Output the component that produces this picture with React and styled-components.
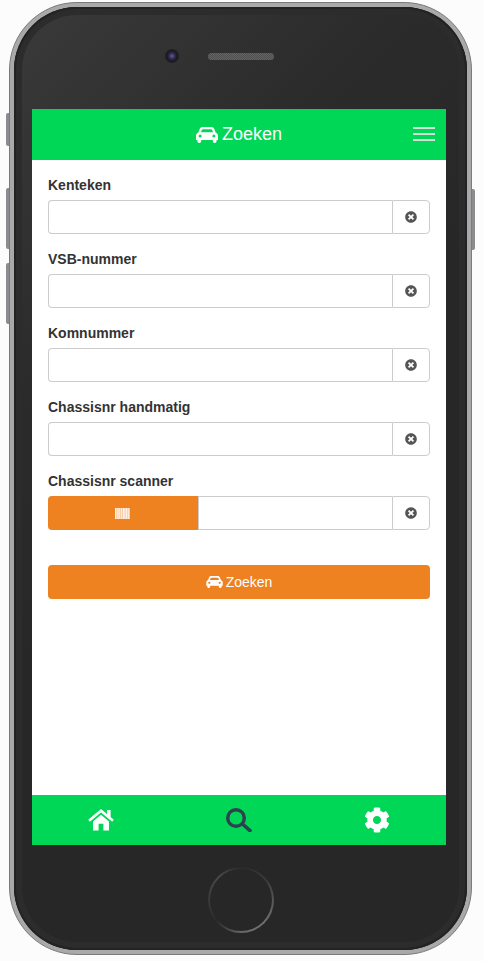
import React from "react";
import styled, { createGlobalStyle } from "styled-components";
import { FaCog, FaTimesCircle } from "react-icons/fa";

const Global = createGlobalStyle`
  html, body { margin: 0; padding: 0; background: #fcfcfc; }
  body { font-family: "Liberation Sans", Arial, sans-serif; overflow: hidden; }
  * { box-sizing: border-box; }
`;

const Page = styled.div`
  width: 484px;
  height: 961px;
  padding: 2px 12px 6px 9px;
`;

const Phone = styled.div`
  position: relative;
  width: 463px;
  height: 953px;
  padding: 4px;
  border: 1px solid #7a7a7a;
  border-radius: 68px;
  background: #a9a9a9;
`;

const SideKey = styled.span`
  position: absolute;
  left: ${(p) => (p.$right ? "auto" : "-4px")};
  right: ${(p) => (p.$right ? "-4px" : "auto")};
  top: ${(p) => p.$top}px;
  width: 3px;
  height: ${(p) => p.$h}px;
  background: #8b8b90;
  border-radius: ${(p) => (p.$right ? "0 2px 2px 0" : "2px 0 0 2px")};
`;

const Bezel = styled.div`
  display: flex;
  flex-direction: column;
  height: 100%;
  padding: 0 21px 0 18px;
  border-radius: 63px;
  background: linear-gradient(135deg, #3a3a3a 0%, #2b2b2b 28%, #272727 50%);
  box-shadow: inset 0 0 0 2px #232323, inset 0 0 0 8px #2c2c2c;
`;

const TopBar = styled.div`
  display: grid;
  grid-template-columns: 1fr auto 1fr;
  align-items: center;
  height: 102px;
  padding: 0 0 4px 4px;
  flex: none;
`;

const Camera = styled.span`
  justify-self: end;
  width: 14px;
  height: 14px;
  margin-right: 29px;
  border-radius: 50%;
  background: radial-gradient(circle, #6a5a95 0%, #3a2f5c 25%, #1c1c24 48%, #1f1f1f 100%);
`;

const Speaker = styled.span`
  width: 66px;
  height: 7px;
  border-radius: 4px;
  background: repeating-conic-gradient(#4e4e4e 0 25%, #656565 0 50%) 0 0 / 2px 2px;
`;

const Screen = styled.div`
  flex: none;
  display: flex;
  flex-direction: column;
  width: 414px;
  height: 736px;
  background: #fff;
`;

const Header = styled.header`
  position: relative;
  display: flex;
  align-items: center;
  justify-content: center;
  gap: 4px;
  height: 51px;
  flex: none;
  background: #00d757;
  color: #fff;
  font-size: 18px;
`;

const Burger = styled.span`
  position: absolute;
  right: 11px;
  top: 18px;
  display: flex;
  flex-direction: column;
  gap: 4px;
  width: 22px;
  & > i { display: block; height: 2px; background: #d4e2d8; }
`;

const Form = styled.form`
  flex: 1;
  display: flex;
  flex-direction: column;
  padding: 16px 16px 0;
`;

const Field = styled.div`
  display: flex;
  flex-direction: column;
  height: 74px;
`;

const Label = styled.label`
  height: 24px;
  font-size: 14px;
  line-height: 18px;
  font-weight: 700;
  color: #333;
`;

const InputGroup = styled.div`
  display: flex;
  height: 34px;
`;

const ScanButton = styled.button`
  flex: none;
  display: flex;
  align-items: center;
  justify-content: center;
  width: 150px;
  padding: 0 2px 0 0;
  border: 0;
  border-radius: 4px 0 0 4px;
  background: #ee8120;
`;

const TextInput = styled.input`
  flex: 1;
  min-width: 0;
  padding: 6px 12px;
  border: 1px solid #ccc;
  border-right: 0;
  border-radius: ${(p) => (p.$joined ? "0" : "4px 0 0 4px")};
  background: #fff;
`;

const Clear = styled.span`
  flex: none;
  display: flex;
  align-items: center;
  justify-content: center;
  width: 38px;
  border: 1px solid #ccc;
  border-radius: 0 4px 4px 0;
  background: #fff;
  color: #555;
  font-size: 12px;
`;

const Submit = styled.button`
  display: flex;
  align-items: center;
  justify-content: center;
  gap: 3px;
  height: 34px;
  margin-top: 19px;
  padding: 0;
  border: 0;
  border-radius: 4px;
  background: #ee8120;
  color: #fff;
  font: 400 14px "Liberation Sans", Arial, sans-serif;
`;

const Nav = styled.nav`
  display: grid;
  grid-template-columns: repeat(3, 1fr);
  height: 50px;
  flex: none;
  background: #00d757;
`;

const NavItem = styled.a`
  display: flex;
  align-items: center;
  justify-content: center;
  font-size: 26px;
  color: #fff;
`;

const BottomBar = styled.div`
  flex: 1;
  display: flex;
  justify-content: center;
  padding-top: 22px;
  padding-left: 3px;
`;

const HomeButton = styled.span`
  width: 66px;
  height: 66px;
  border-radius: 50%;
  border: 2px solid transparent;
  background: linear-gradient(#272727, #272727) padding-box,
    conic-gradient(#2a2a2a 0deg, #3a3a3a 50deg, #646464 110deg, #747474 150deg, #666 180deg, #2a2a2a 230deg, #3c3c3c 275deg, #4a4a4a 315deg, #2a2a2a 360deg) border-box;
`;

const CarIcon = ({ w, h }) => (
  <svg width={w} height={h} viewBox="0 0 22 16" aria-hidden="true">
    <path
      fill="currentColor"
      fillRule="evenodd"
      d="M6.8 0H15.2C16.8 0 17.9 .9 18.4 2.2L19.6 5.4C21 6 22 7.2 22 8.8V13H20.6V14C20.6 15.1 19.8 16 18.7 16C17.6 16 16.8 15.1 16.8 14V13H5.2V14C5.2 15.1 4.4 16 3.3 16C2.2 16 1.4 15.1 1.4 14V13H0V8.8C0 7.2 1 6 2.4 5.4L3.6 2.2C4.1 .9 5.2 0 6.8 0ZM7 2.2C6.4 2.2 6 2.5 5.8 3L5 5.2H17L16.2 3C16 2.5 15.6 2.2 15 2.2ZM2.6 9a1.5 1.5 0 1 0 3 0a1.5 1.5 0 1 0-3 0ZM16.4 9a1.5 1.5 0 1 0 3 0a1.5 1.5 0 1 0-3 0Z"
    />
  </svg>
);

const HomeIcon = () => (
  <svg width="26" height="22" viewBox="0 0 26 22" aria-hidden="true">
    <path d="M1 11.8L13 1.8L25 11.8" fill="none" stroke="#fff" strokeWidth="2.6" />
    <rect x="19" y="1" width="3.6" height="7" fill="#fff" />
    <path d="M5 12.4L13 5.8L21 12.4V21.5H15.4V14.8H10.6V21.5H5Z" fill="#fff" />
  </svg>
);

const SearchIcon = () => (
  <svg width="26" height="24" viewBox="0 0 26 24" aria-hidden="true">
    <circle cx="10" cy="10" r="8.3" fill="none" stroke="#2f4050" strokeWidth="3.4" />
    <path d="M16.5 16L24 22.6" fill="none" stroke="#2f4050" strokeWidth="3.6" strokeLinecap="round" />
  </svg>
);

const Barcode = () => (
  <svg width="15" height="11" viewBox="0 0 15 11" aria-hidden="true">
    <rect width="15" height="11" fill="#fff" opacity="0.6" />
    {[0, 2, 3.5, 6, 8, 9.5, 11, 13].map((x, i) => (
      <rect key={x} x={x} width={i % 2 ? 0.8 : 1.2} height="11" fill="#fff" opacity="0.75" />
    ))}
  </svg>
);

const fields = ["Kenteken", "VSB-nummer", "Komnummer", "Chassisnr handmatig"];

export default function App() {
  return (
    <Page>
      <Global />
      <Phone>
        <SideKey $top={110} $h={33} />
        <SideKey $top={185} $h={61} />
        <SideKey $top={260} $h={61} />
        <SideKey $right $top={186} $h={61} />
        <Bezel>
          <TopBar>
            <Camera />
            <Speaker />
          </TopBar>
          <Screen>
            <Header>
              <CarIcon w={22} h={16} />
              <span>Zoeken</span>
              <Burger><i /><i /><i /></Burger>
            </Header>
            <Form>
              {fields.map((f) => (
                <Field key={f}>
                  <Label>{f}</Label>
                  <InputGroup>
                    <TextInput />
                    <Clear><FaTimesCircle /></Clear>
                  </InputGroup>
                </Field>
              ))}
              <Field>
                <Label>Chassisnr scanner</Label>
                <InputGroup>
                  <ScanButton type="button"><Barcode /></ScanButton>
                  <TextInput $joined />
                  <Clear><FaTimesCircle /></Clear>
                </InputGroup>
              </Field>
              <Submit type="button"><CarIcon w={17} h={12} /><span>Zoeken</span></Submit>
            </Form>
            <Nav>
              <NavItem><HomeIcon /></NavItem>
              <NavItem><SearchIcon /></NavItem>
              <NavItem><FaCog /></NavItem>
            </Nav>
          </Screen>
          <BottomBar><HomeButton /></BottomBar>
        </Bezel>
      </Phone>
    </Page>
  );
}
